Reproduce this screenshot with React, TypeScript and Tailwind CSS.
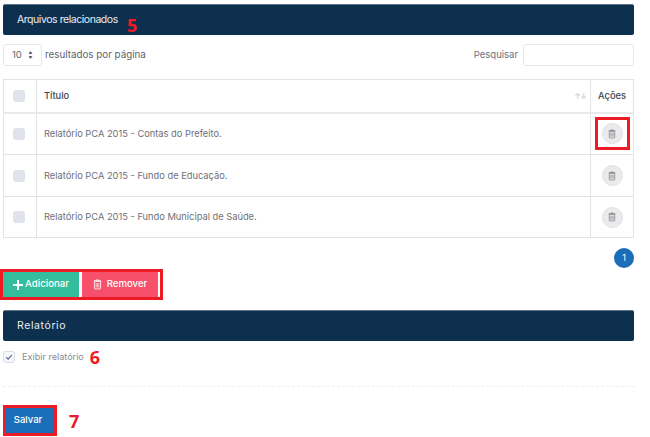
import React from "react";

function Trash({ className }: { className?: string }) {
  return (
    <svg viewBox="0 0 12 14" className={className} fill="none" stroke="currentColor" strokeWidth="1.1">
      <path d="M4.2 1.6V.9h3.6v.7" />
      <rect x="1.9" y="2.9" width="8.2" height="10" rx="0.6" />
      <path d="M1 2.2h10" strokeWidth="1.4" />
      <path d="M4.2 5v6M6 5v6M7.8 5v6" strokeWidth="0.9" />
    </svg>
  );
}

function Box() {
  return <span className="block w-3 h-3 rounded-[3px] bg-[#e0e3ec]" />;
}

const rows = [
  { text: "Relatório PCA 2015 - Contas do Prefeito.", cls: "h-[42px] border-b border-[#e3e3e3]" },
  { text: "Relatório PCA 2015 - Fundo de Educação.", cls: "h-[42px] border-b border-[#e3e3e3]" },
  { text: "Relatório PCA 2015 - Fundo Municipal de Saúde.", cls: "h-[41px] border-b border-[#e3e3e3]" },
];

export default function App() {
  return (
    <div className="w-[650px] h-[437px] overflow-hidden bg-white pl-[3px] pr-[16px] pt-1 font-['Inter',sans-serif] text-[#6c757d]">
      <div className="h-[31px] bg-[#0e304f] rounded-[2px] flex items-center pl-[14px] text-[10.5px] text-[#e8edf2] border-t border-t-[#5f7488]">
        <span className="w-[100px] whitespace-nowrap tracking-[-0.45px]">Arquivos relacionados</span>
        <span className="ml-[10px] mt-[10px] text-[18px] font-bold text-[#ed1c24] leading-none font-['Open_Sans',sans-serif]">5</span>
      </div>

      <div className="mt-[9px] h-[22px] flex items-center justify-between">
        <div className="flex items-center">
          <div className="w-[39px] h-[22px] border border-[#e4e7ed] rounded-[3px] flex items-center justify-between pl-2 pr-2 text-[9.5px] text-[#5b6470]">
            <span>10</span>
            <svg viewBox="0 0 6 9" className="w-[5px] h-2" fill="#3b4450"><path d="M3 0l2.4 3H.6zM3 9L.6 6h4.8z" /></svg>
          </div>
          <span className="ml-[3px] text-[9.8px] text-[#5b6470]">resultados por página</span>
        </div>
        <div className="flex items-center">
          <span className="text-[9.5px] text-[#6b6f7c] mr-[5px]">Pesquisar</span>
          <div className="w-[111px] h-[22px] border border-[#e4e7ed] rounded-[3px]" />
        </div>
      </div>

      <table className="mt-[13px] w-full table-fixed border-collapse border border-[#e3e3e3] text-[9.3px]">
        <thead>
          <tr className="h-[33px] border-b-2 border-[#e9e9e9]">
            <th className="w-[33px] border-r border-[#e3e3e3] pl-[9px]"><Box /></th>
            <th className="border-r border-[#e3e3e3] pl-[7px] pr-[4px] text-left font-medium text-[#3d4450]">
              <div className="flex items-center justify-between">
                <span>Título</span>
                <span className="text-[8px] text-[#c9ccd0] tracking-[-1px]">↑↓</span>
              </div>
            </th>
            <th className="w-[43px] text-center font-medium text-[#3d4450]">Ações</th>
          </tr>
        </thead>
        <tbody>
          {rows.map((r, i) => (
            <tr key={r.text} className={r.cls}>
              <td className="border-r border-[#e3e3e3] pl-[9px]"><Box /></td>
              <td className="border-r border-[#e3e3e3] pl-[7px] text-[#6f6f78]">{r.text}</td>
              <td className="p-0">
                <div className="flex justify-center">
                  <div className={i === 0 ? "w-[35px] h-[33px] border-[3px] border-[#ed1c24] flex items-center justify-center" : "w-[35px] h-[33px] flex items-center justify-center"}>
                    <div className="w-[21px] h-[21px] rounded-full bg-[#ebebeb] border border-[#e0e0e0] flex items-center justify-center">
                      <Trash className="w-[8px] h-[10px] text-[#7d7f8b]" />
                    </div>
                  </div>
                </div>
              </td>
            </tr>
          ))}
        </tbody>
      </table>

      <div className="mt-[10px] flex justify-end">
        <div className="w-5 h-5 rounded-full bg-[#1b6db7] text-white text-[9px] flex items-center justify-center">1</div>
      </div>

      <div className="mt-[1px] -ml-[3px] w-[163px] h-[31px] border-[3px] border-[#ed1c24] flex gap-[3px] text-[9.6px] font-medium text-white">
        <div className="w-[76px] bg-[#33bd9d] flex items-center justify-center gap-[2px]">
          <svg viewBox="0 0 10 10" className="w-[10px] h-[10px]" fill="none" stroke="white" strokeWidth="2"><path d="M5 0v10M0 5h10" /></svg>
          <span>Adicionar</span>
        </div>
        <div className="w-[76px] bg-[#f6506d] flex items-center justify-center gap-[5px]">
          <Trash className="w-[9px] h-[11px] text-white" />
          <span>Remover</span>
        </div>
      </div>

      <div className="mt-[10px] h-[31px] bg-[#0e304f] rounded-[2px] flex items-center pl-[14px] text-[10.5px] text-[#e8edf2] border-t border-t-[#5f7488]">
        <span className="tracking-[0.6px]">Relatório</span>
      </div>

      <div className="mt-[9px] h-[13px] flex items-center">
        <span className="w-3 h-3 rounded-[3px] border border-[#d9dcea] bg-[#f6f7fb] flex items-center justify-center">
          <svg viewBox="0 0 10 10" className="w-2 h-2" fill="none" stroke="#5a6190" strokeWidth="1.4"><path d="M1.5 5.2l2.4 2.4 4.6-5" /></svg>
        </span>
        <span className="ml-[7px] text-[9.1px] text-[#8a8a90]">Exibir relatório</span>
        <span className="ml-[6px] text-[18px] font-bold text-[#ed1c24] leading-none font-['Open_Sans',sans-serif]">6</span>
      </div>

      <div className="mt-[23px] border-t border-dashed border-[#efefef]" />

      <div className="mt-[18px] flex items-center">
        <div className="w-[54px] h-[31px] border-[3px] border-[#ed1c24] bg-[#1b6fba] flex items-center justify-center pr-[4px] text-[9.5px] font-medium text-white">Salvar</div>
        <span className="ml-[12px] text-[18px] font-bold text-[#ed1c24] leading-none font-['Open_Sans',sans-serif]">7</span>
      </div>
    </div>
  );
}
